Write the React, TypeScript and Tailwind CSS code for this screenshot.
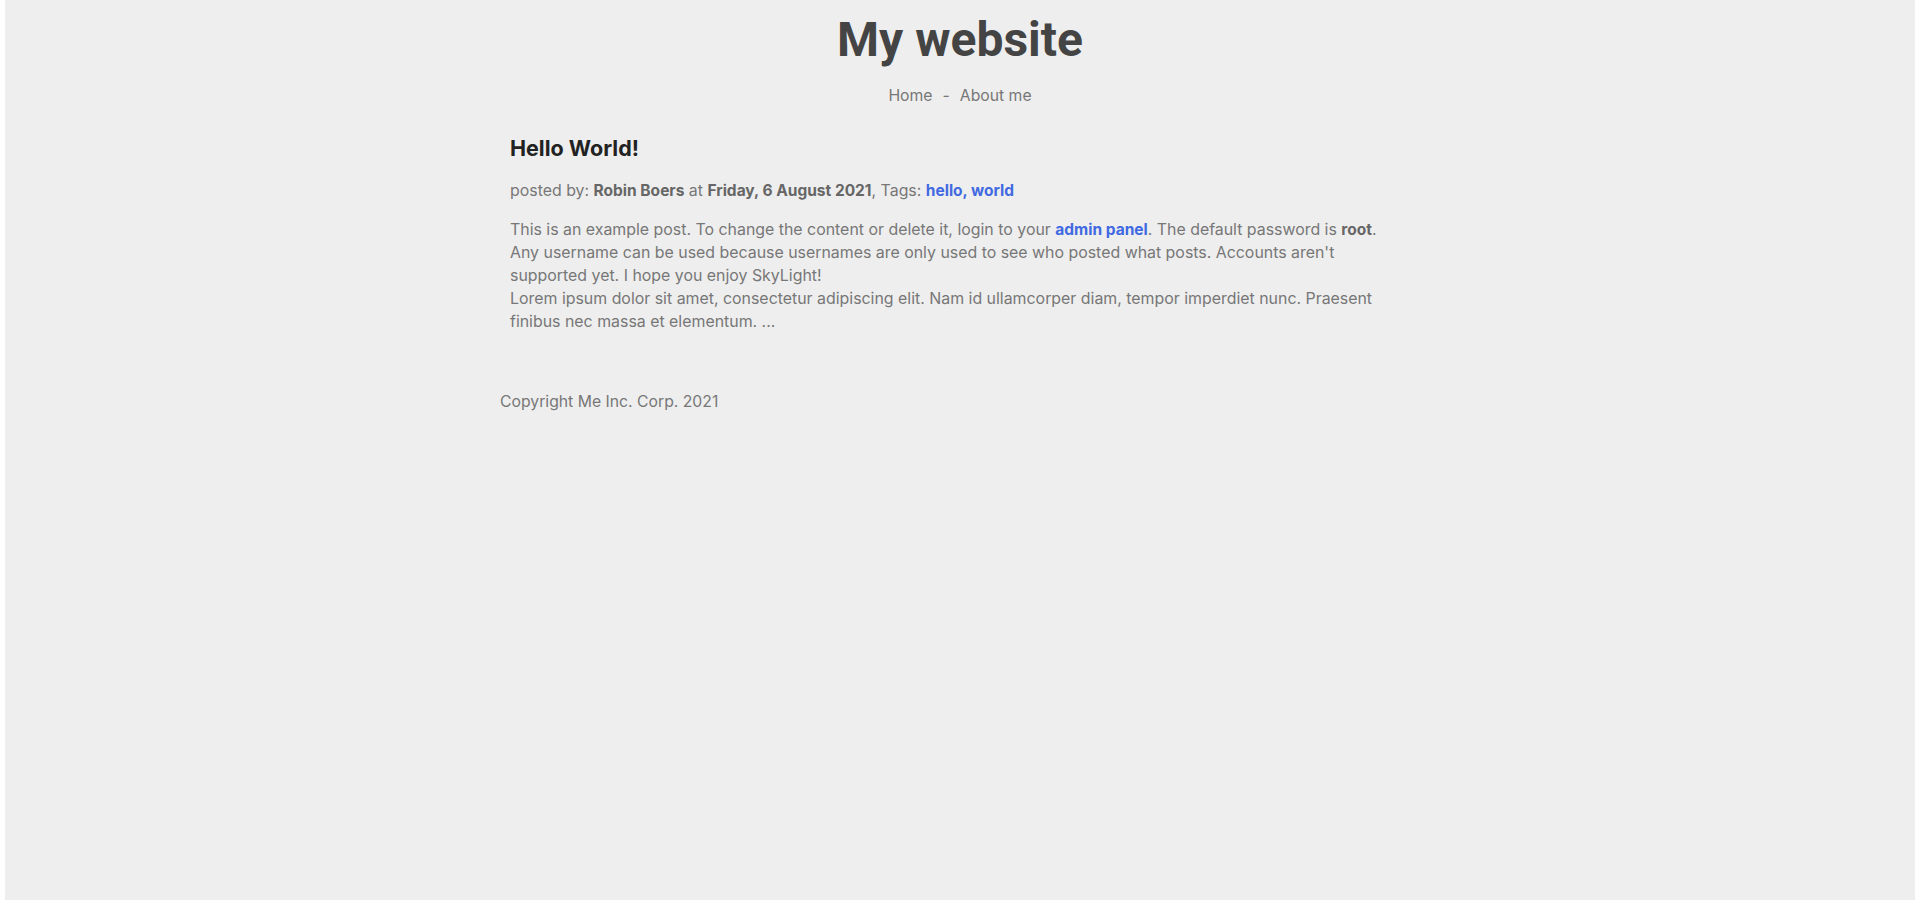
export default function App() {
	return (
		<div className="min-h-screen bg-white font-['Inter',sans-serif]">
			<div className="mx-[5px] min-h-screen bg-[#eeeeee]">
				{/* Header */}
				<header className="pt-[12px] text-center">
					<h1 className="font-['Roboto',sans-serif] text-[48px] leading-[56px] font-bold text-[#444444]">
						My website
					</h1>
					<nav className="mt-[16px] flex items-center justify-center gap-[10px] text-[15.75px] leading-[24px] text-[#777777]">
						<a href="#">Home</a>
						<span>-</span>
						<a href="#">About me</a>
					</nav>
				</header>

				<main className="mx-auto w-[920px]">
					{/* Post */}
					<article className="pt-[26px] pl-[10px] pr-[20px]">
						<h2 className="text-[21.5px] leading-[28px] font-bold text-[#222222]">
							Hello World!
						</h2>
						<p className="mt-[17px] text-[15.9px] leading-[23px] text-[#777777]">
							posted by:{" "}
							<b className="text-[15.5px] text-[#666666]">Robin Boers</b> at{" "}
							<b className="text-[15.5px] text-[#666666]">
								Friday, 6 August 2021
							</b>
							, Tags:{" "}
							<a className="text-[15.5px] font-bold text-[#4169e1]" href="#">
								hello, world
							</a>
						</p>
						<div className="mt-[16px] text-[15.9px] leading-[23px] text-[#777777]">
							<p>
								This is an example post. To change the content or delete it,
								login to your{" "}
								<a className="text-[15.5px] font-bold text-[#4169e1]" href="#">
									admin panel
								</a>
								. The default password is{" "}
								<b className="text-[15.5px] text-[#666666]">root</b>. Any
								username can be used because usernames are only used to see who
								posted what posts. Accounts aren't supported yet. I hope you
								enjoy SkyLight!
							</p>
							<p>
								Lorem ipsum dolor sit amet, consectetur adipiscing elit. Nam id
								ullamcorper diam, tempor imperdiet nunc. Praesent finibus nec
								massa et elementum. ...
							</p>
						</div>
					</article>

					{/* Footer */}
					<footer className="mt-[57px] text-[15.75px] leading-[23px] text-[#777777]">
						Copyright Me Inc. Corp. 2021
					</footer>
				</main>
			</div>
		</div>
	);
}
